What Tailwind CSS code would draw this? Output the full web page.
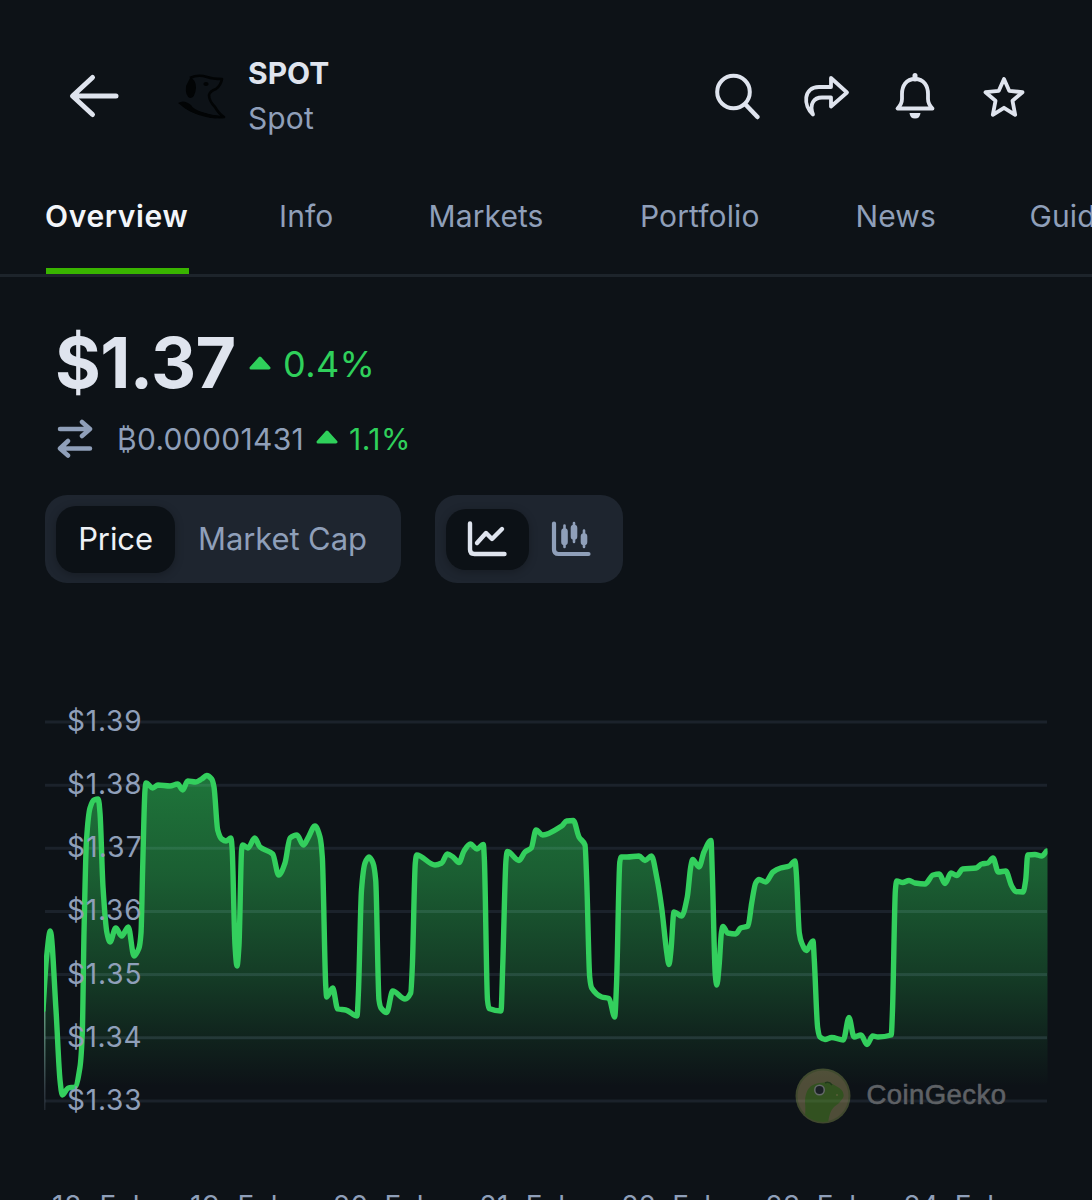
<!DOCTYPE html>
<html lang="en">
<head>
<meta charset="utf-8">
<title>SPOT price</title>
<script src="https://cdn.jsdelivr.net/npm/@tailwindcss/browser@4"></script>
</head>
<body class="bg-[#0d1217] overflow-hidden">
<div class="w-[1092px] h-[1200px] overflow-hidden bg-[#0d1217] font-['Inter',sans-serif] text-[#8f9fb9]">
  <header class="flex items-center h-[192px] pl-[68px] pr-[64px]">
    <svg class="w-[52px] h-[48px] shrink-0" viewBox="0 0 52 48" fill="none" stroke="#dfe4ee" stroke-width="5" stroke-linecap="round" stroke-linejoin="round"><path d="M48 24H5M24.500 5.500L4.500 24L24.500 42.500"/></svg>
    <svg class="w-[52px] h-[50px] ml-[56px] shrink-0" viewBox="0 0 52 50"><path d="M14 7Q22 3 31 6Q37 8 46 8Q45 14 40 18Q34 20 33 24Q33 30 39 36Q43 43 48 46Q38 47 27 43Q13 41 5 32" fill="none" stroke="#020405" stroke-width="2.600" stroke-linejoin="round"/><path d="M14 7Q20 8 20 17Q19 27 14 27Q9 25 10 15Z" fill="#020405"/><ellipse cx="30" cy="13" rx="2.600" ry="2" fill="#020405"/><path d="M2 32Q8 28 15 34Q17 38 26 41Q38 45 48 45Q42 49 30 46Q15 43 2 32Z" fill="#020405"/></svg>
    <div class="ml-[20px] mt-[-1px] flex flex-col text-[30px] leading-[45px]">
      <span class="font-bold text-[#dfe4ee]">SPOT</span>
      <span class="tracking-[0.1px]">Spot</span>
    </div>
    <div class="ml-auto mt-[-1px] flex items-center gap-[38px]">
      <svg class="w-[50px] h-[50px]" viewBox="0 0 50 50" fill="none" stroke="#dfe4ee" stroke-width="4" stroke-linecap="round"><circle cx="19.500" cy="21" r="16.300"/><path d="M32 34L43.500 46" stroke-width="4.500"/></svg>
      <svg class="w-[50px] h-[50px]" viewBox="0 0 50 50" fill="none" stroke="#dfe4ee" stroke-width="3.800" stroke-linejoin="round"><path d="M29 7L45 21.500L29 35.500V26.500H20C12 26.500 7 33 11 43.500C1 35 1 16 17 16H29Z"/></svg>
      <svg class="w-[50px] h-[50px]" viewBox="0 0 50 50" fill="none" stroke="#dfe4ee" stroke-width="3.800" stroke-linejoin="round"><path d="M25 8C16 8 12 15 12 23V28Q12 33 7.500 37.500H42.500Q38 33 38 28V23C38 15 34 8 25 8Z"/><path d="M25 4.500V8" stroke-width="5" stroke-linecap="round"/><path d="M19.500 42H30.500Q30 47.500 25 47.500T19.500 42Z" fill="#dfe4ee" stroke="none"/></svg>
      <svg class="w-[50px] h-[50px]" viewBox="0 0 50 50" fill="none" stroke="#dfe4ee" stroke-width="3.800" stroke-linejoin="round"><path d="M26 8L31.200 19.800L44.500 21.200L34.500 29.800L37.200 43.800L26 36.800L14.800 43.800L17.500 29.800L7.500 21.200L20.800 19.800Z"/></svg>
    </div>
  </header>

  <nav class="h-[85px] border-b-3 border-[#1d242b] pl-[46px] grid grid-cols-[233px_149.500px_211.500px_215.500px_174px_120px] text-[30px] leading-[48px] tracking-[0.1px]">
    <div class="flex"><div class="w-[143px] h-[82px] border-b-6 border-[#39b400] font-semibold text-[#f2f5f9] whitespace-nowrap"><span class="ml-[-1px] tracking-[0.65px]">Overview</span></div></div>
    <span>Info</span><span>Markets</span><span>Portfolio</span><span>News</span><span>Guides</span>
  </nav>

  <section class="pl-[57px] pt-[46px]">
    <div class="flex items-center h-[80px]">
      <span class="w-[194px] ml-[-2px] text-[70px] leading-[80px] font-bold text-[#dfe4ee] tracking-[-0.6px]">$1.37</span>
      <svg class="w-[22px] h-[14px]" viewBox="0 0 22 14"><path d="M11 2L20 12H2Z" fill="#2fd05b" stroke="#2fd05b" stroke-width="3" stroke-linejoin="round"/></svg>
      <span class="ml-[12px] text-[36px] leading-[80px] text-[#2fd05b] tracking-[0.4px] mt-[2px]">0.4%</span>
    </div>
    <div class="flex items-center h-[40px] mt-[16px]">
      <svg class="w-[36px] h-[40px]" viewBox="0 0 36 40" fill="none" stroke="#8f9fb9" stroke-width="4.500" stroke-linecap="round" stroke-linejoin="round"><path d="M3 10H33M25 3L33 10L25 17M33 29.500H3M11 22L3 29.500L11 36.500"/></svg>
      <span class="ml-[24px] w-[199px] text-[30px] whitespace-nowrap tracking-[0.3px]">₿0.00001431</span>
      <svg class="w-[22px] h-[14px] mt-[-4px]" viewBox="0 0 22 14"><path d="M11 2L20 12H2Z" fill="#2fd05b" stroke="#2fd05b" stroke-width="3" stroke-linejoin="round"/></svg>
      <span class="ml-[11px] text-[30px] text-[#2fd05b] tracking-[0.5px]">1.1%</span>
    </div>
  </section>

  <div class="flex gap-[34px] pl-[45px] mt-[36px] h-[88px] text-[31px]">
    <div class="w-[356px] rounded-[22px] bg-[#1e252f] flex items-center pl-[11px]">
      <div class="w-[119px] h-[67px] rounded-[20px] bg-[#0c1116] text-[#eef1f6] flex items-center justify-center tracking-[-0.1px] shadow-[0_2px_8px_rgba(0,0,0,0.25)]">Price</div>
      <span class="ml-[23px] tracking-[-0.1px]">Market Cap</span>
    </div>
    <div class="w-[188px] rounded-[22px] bg-[#1e252f] flex items-center pl-[11px]">
      <div class="w-[83px] h-[61px] rounded-[20px] bg-[#0c1116] flex items-center justify-center shadow-[0_2px_8px_rgba(0,0,0,0.25)]">
        <svg class="w-[42px] h-[40px]" viewBox="1 0.500 42 40" fill="none" stroke="#dfe4ee" stroke-width="4.400" stroke-linecap="round" stroke-linejoin="round"><path d="M4 5V31Q4 35.500 8.500 35.500H38.500M11 24.500L20 14.500L26 20.500L36 10.500"/></svg>
      </div>
      <svg class="ml-[21px] w-[42px] h-[40px]" viewBox="0 0.500 42 40" fill="none" stroke="#8f9fb9" stroke-width="4.200" stroke-linecap="round" stroke-linejoin="round"><path d="M4 5V31Q4 35.500 8.500 35.500H38.500"/><path d="M14.500 7V28.500M24 4.500V23.500M34 12V28.500" stroke-width="2.600"/><path d="M14.500 13V23.500M24 9.500V18M34 18V23.500" stroke-width="6.600"/></svg>
    </div>
  </div>

  <svg class="block w-[1092px] h-[617px]" viewBox="0 583 1092 617">
    <defs>
      <linearGradient id="area" gradientUnits="userSpaceOnUse" x1="0" y1="775" x2="0" y2="1110">
        <stop offset="0" stop-color="#2fd05b" stop-opacity=".52"/><stop offset=".3" stop-color="#2fd05b" stop-opacity=".4"/><stop offset=".6" stop-color="#2fd05b" stop-opacity=".22"/><stop offset=".8" stop-color="#2fd05b" stop-opacity=".08"/><stop offset=".93" stop-color="#2fd05b" stop-opacity="0"/>
      </linearGradient>
      <linearGradient id="edge" x1="0" y1="0" x2="0" y2="1"><stop offset="0" stop-color="#6fc98c"/><stop offset="1" stop-color="#8f9fb9" stop-opacity=".15"/></linearGradient>
      <clipPath id="plot"><rect x="44" y="700" width="1003.500" height="420"/></clipPath>
      <clipPath id="under"><path id="underPath"/></clipPath>
      <clipPath id="coin"><circle cx="823" cy="1096" r="26"/></clipPath>
    </defs>
    <g id="grid" stroke="#1b222b" stroke-width="3"></g>
    <g clip-path="url(#plot)">
      <path id="fill" fill="url(#area)"/>
      <path clip-path="url(#under)" d="M45 785.200H1047M45 848.300H1047M45 911.500H1047M45 974.700H1047M45 1037.800H1047" stroke="#8f9fb9" stroke-opacity=".07" stroke-width="3"/>
      <rect x="44" y="970" width="1.500" height="140" fill="url(#edge)"/>
      <path id="line" fill="none" stroke="#33cf5d" stroke-width="5.400" stroke-linejoin="round" stroke-linecap="round"/>
    </g>
    <g id="ylabels" fill="#8f9fb9" font-size="28"></g>
    <g opacity=".4">
      <circle cx="823" cy="1096" r="27.500" fill="#8d9a52"/>
      <circle cx="823" cy="1096" r="25.500" fill="#b3a56a"/>
      <g clip-path="url(#coin)"><path d="M804 1124Q806 1113 805 1102Q805 1085 819 1083Q829 1081 836 1086Q846 1091 843 1098Q840 1103 834 1107Q829 1112 828 1124Z" fill="#6bb02f"/></g>
      <path d="M825 1083Q829 1081 832 1085" fill="none" stroke="#3c6f20" stroke-width="1.500"/>
      <circle cx="819.500" cy="1090" r="5.500" fill="#e5e9e4"/><circle cx="819.500" cy="1090" r="4" fill="#30363c"/>
      <circle cx="837" cy="1095" r="1" fill="#c5ce6a"/>
    </g>
    <text x="866.500" y="1104" font-family="Liberation Sans, sans-serif" font-size="27.500" fill="#5e6165" stroke="#5e6165" stroke-width=".6" textLength="139.500">CoinGecko</text>
    <g id="xlabels" fill="#8f9fb9" font-size="28"></g>
  </svg>
</div>
<script>
const pts = [[43,1010],[46.500,958],[50.300,931],[56,1010],[60,1080],[62.300,1095],[68.300,1088],[75,1087],[80,1067],[82.300,1033],[84,933],[86.500,840],[90,808],[94,800],[98.300,799],[100,813],[103,887],[107,933],[110,942],[115.700,928],[121.700,936],[128.300,927],[134,956],[139,948],[141,933],[142.700,867],[145,790],[146,783],[152.700,788],[158,785],[170,786],[177.700,784],[182.700,790],[187.700,781],[195.700,782],[201.700,779],[206.700,775.500],[211.700,779],[214,787],[217.700,830],[221.700,839],[226,841],[231,838],[232.200,850],[235,945],[237,966],[239,945],[241.600,850],[242.700,845],[248,848],[254.700,838],[260,847],[272.700,854],[278.700,875],[285,863],[290,838],[297,835],[303.300,845],[308,838],[315,826],[320,837],[322.300,857],[325.700,985],[326.700,997],[332.700,988],[337.700,1009],[345.700,1010],[357,1016],[358.400,993],[361.500,890],[365,863],[369,857],[373,863],[375.700,880],[379,1000],[381,1008],[386.700,1012.500],[392.700,991],[405,999],[410.700,993],[412.300,967],[415.300,863],[416.700,855],[435,865],[441.700,863],[447.300,854],[453,857],[459,862.500],[464,851],[470.300,844],[477,849],[483.300,844.500],[484.400,860],[487.500,1000],[489,1008.500],[501,1011],[502.700,967],[506,860],[507.300,851.500],[519,860.500],[525,852],[531.300,848],[536,830],[542.700,835],[561.700,826],[566.700,821],[573.300,820.500],[579,837],[585,845],[586.700,880],[589.700,977],[591.700,988],[601.700,997],[609,998.500],[614.700,1017],[616.500,985],[619.800,862],[621,857],[627,857],[639,856],[645,860.500],[651.500,856],[656.700,877],[661.700,908],[666.700,952],[669,964.500],[671,950],[674,912],[681.700,916],[687.300,897],[690.700,867],[692.700,859.500],[699,867],[704,852],[711,840.500],[712.300,873],[715.300,975],[716.800,985],[719,967],[721.500,932],[723,926.500],[727.700,933],[735.700,934],[740.700,928],[748,926],[751.700,903],[755.700,883],[759,879.500],[765.700,882],[773,872],[780.700,868],[789.300,866],[795,861],[796.300,873],[799.300,933],[801.700,943],[806.300,950.500],[813,941],[814.300,960],[817.700,1028],[820,1037],[825,1039.500],[831.700,1037.500],[843.300,1040],[849,1017.500],[854,1037],[861,1035],[867,1044.500],[872.700,1036],[878,1037],[891.200,1035],[892.500,1010],[895.400,890],[896.700,881],[902.700,882.500],[909,880.500],[915,883],[925,884],[933,875],[939.300,874],[945,883.500],[951,873],[956.700,875.500],[962.700,869],[976,868],[981.700,864],[988,863],[993,858],[998.300,872],[1005.700,871],[1011.700,886],[1016,891.500],[1023,892],[1025.700,880],[1027.700,855],[1035,854.500],[1041.700,856],[1046.700,851]];
// Monotone cubic interpolation between samples
const n = pts.length, s = [], m = [];
for (let i = 0; i < n - 1; i++) s.push((pts[i+1][1]-pts[i][1])/(pts[i+1][0]-pts[i][0]));
for (let i = 0; i < n; i++) {
  if (i === 0) m.push(s[0]);
  else if (i === n-1) m.push(s[n-2]);
  else m.push(s[i-1]*s[i] <= 0 ? 0 : 2*s[i-1]*s[i]/(s[i-1]+s[i]));
}
let d = 'M' + pts[0];
for (let i = 0; i < n - 1; i++) {
  const h = (pts[i+1][0]-pts[i][0])/3;
  d += `C${pts[i][0]+h},${pts[i][1]+m[i]*h} ${pts[i+1][0]-h},${pts[i+1][1]-m[i+1]*h} ${pts[i+1]}`;
}
document.getElementById('line').setAttribute('d', d);
for (const id of ['fill', 'underPath'])
  document.getElementById(id).setAttribute('d', d + 'L1048,851V1110H45Z');
let grid = '', yl = '', xl = '';
['1.39','1.38','1.37','1.36','1.35','1.34','1.33'].forEach((v, i) => {
  const y = 722 + i*63.15;
  grid += `<path d="M45 ${y}H1047"/>`;
  yl += `<text x="67" y="${y+9}" textLength="74.500">$${v}</text>`;
});
[[52,98],[190,98],[333,101],[479.500,96],[621.500,100],[765.500,101],[903.500,101]].forEach(([x, w], i) => {
  xl += `<text x="${x}" y="1216" textLength="${w}">${18+i}. Feb</text>`;
});
document.getElementById('grid').innerHTML = grid;
document.getElementById('ylabels').innerHTML = yl;
document.getElementById('xlabels').innerHTML = xl;
</script>
</body>
</html>
